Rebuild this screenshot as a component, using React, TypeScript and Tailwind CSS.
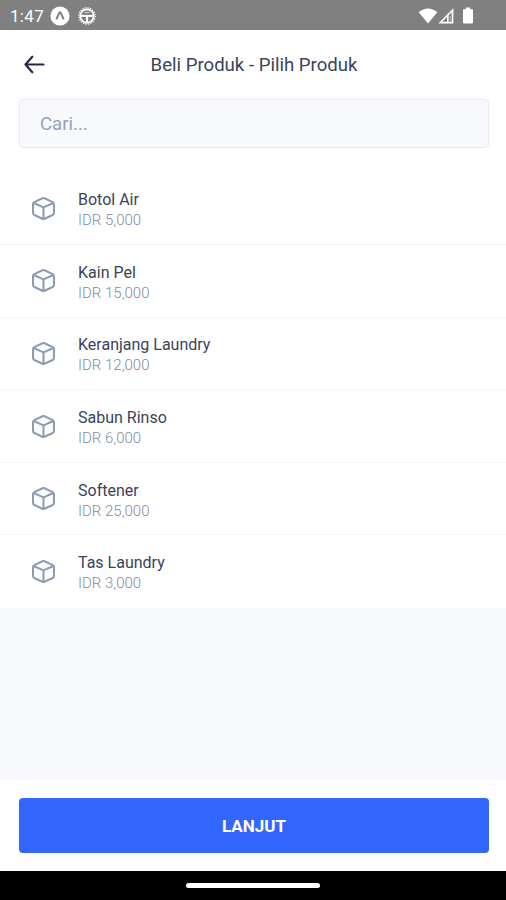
import React from 'react';

const products = [
  { name: 'Botol Air', price: 'IDR 5,000' },
  { name: 'Kain Pel', price: 'IDR 15,000' },
  { name: 'Keranjang Laundry', price: 'IDR 12,000' },
  { name: 'Sabun Rinso', price: 'IDR 6,000' },
  { name: 'Softener', price: 'IDR 25,000' },
  { name: 'Tas Laundry', price: 'IDR 3,000' },
];

const CubeIcon = () => (
  <svg
    className="w-[31px] h-[31px] shrink-0 text-[#8f9bb3]"
    xmlns="http://www.w3.org/2000/svg"
    viewBox="0 0 24 24"
    fill="none"
    stroke="currentColor"
    strokeWidth="1.6"
    strokeLinejoin="round"
  >
    <path d="M11.2 4.1 4.9 7.05Q3.9 7.6 3.9 8.5v7q0 1 1 1.5l6.3 2.95q.8.35 1.6 0l6.3-2.95q1-.5 1-1.5v-7q0-.9-1-1.45L12.8 4.1q-.8-.35-1.6 0z" />
    <path d="M4.4 7.7 12 11.1l7.6-3.4M12 11.1v8.7" />
  </svg>
);

const StatusBar = () => (
  <div className="flex h-[30px] shrink-0 items-center justify-between bg-[#808080] pl-[10px] pr-[32px] pt-px text-white">
    <div className="flex items-center">
      <span className="w-[40px] text-[17px] leading-5 tracking-[0.3px]">1:47</span>
      <svg className="h-5 w-5" viewBox="0 0 20 20">
        <circle cx="10" cy="10" r="9.6" fill="white" />
        <path d="M6.3 13.4 8.9 7.5Q10 5.2 11.1 7.5l2.6 5.9" fill="none" stroke="#808080" strokeWidth="2" />
      </svg>
      <svg className="ml-[8px] h-[18px] w-[18px]" viewBox="0 0 18 18" fill="none" stroke="white">
        <circle cx="9" cy="9" r="8.1" strokeWidth="1.2" strokeDasharray="1.5 1.05" />
        <circle cx="9" cy="9" r="6.7" strokeWidth="1.7" />
        <path d="M3 8.9h12" strokeWidth="2" />
        <path d="M9 9v7" strokeWidth="2.2" />
        <path d="M6.5 5.5h5" strokeWidth=".6" />
      </svg>
    </div>
    <div className="flex items-center">
      <svg className="h-4 w-5" viewBox="0 0 20 16" fill="white">
        <path d="M.7 4.3Q10-3.2 19.3 4.3L10 15.5z" />
      </svg>
      <svg className="h-4 w-4" viewBox="0 0 16 16">
        <path d="M15.4.3v15.1H.3z" fill="white" />
        <path d="M9 8.9v4.9H4.1z" fill="#808080" />
        <path d="M10.6 7.3 13.7 4.2v9.6h-3.1z" fill="#808080" />
        <path d="M12.2 8v5.8" stroke="#b8b8b8" strokeWidth="1" />
      </svg>
      <svg className="ml-[8px] h-[17px] w-[12px]" viewBox="0 0 12 17" fill="white">
        <path d="M3.8.5h4.4v1.7H10q1 0 1 1v12.3q0 1-1 1H2q-1 0-1-1V3.2q0-1 1-1h1.8z" />
      </svg>
    </div>
  </div>
);

const App = () => {
  return (
    <div className="flex h-[900px] w-[506px] flex-col overflow-hidden bg-[#f7f9fc] font-[Roboto,sans-serif]">
      <StatusBar />

      {/* header */}
      <div className="shrink-0 bg-white">
        <div className="flex h-[69px] items-center px-[19px]">
          <svg
            className="h-[31px] w-[31px] shrink-0 text-[#222b45]"
            xmlns="http://www.w3.org/2000/svg"
            viewBox="0 0 24 24"
            fill="none"
            stroke="currentColor"
            strokeWidth="1.7"
            strokeLinecap="round"
            strokeLinejoin="round"
          >
            <path d="M19 12H5M10.3 6 5 12l5.3 6" />
          </svg>
          <h1 className="flex-1 pr-[29px] pt-[3px] text-center text-[18.6px] text-[#3b4359]">
            Beli Produk - Pilih Produk
          </h1>
        </div>
        <div className="px-[19px] pb-[24.5px]">
          <input
            className="block h-[49px] w-[470px] rounded border border-[#e4e9f2] bg-[#f7f9fc] px-5 text-[18.6px] placeholder-[#97a2b9] outline-none"
            placeholder="Cari..."
          />
        </div>
      </div>

      {/* product list */}
      <ul className="shrink-0 bg-white">
        {products.map((product) => (
          <li
            key={product.name}
            className="flex h-[72.6px] items-center border-b border-[#f2f5fa] pl-7 last:border-transparent"
          >
            <CubeIcon />
            <div className="ml-[19px] pt-[4px]">
              <p className="text-[16px] leading-[21px] text-[#3b4359]">{product.name}</p>
              <p className="text-[15px] font-light leading-[21px] text-[#7f8ba6]">{product.price}</p>
            </div>
          </li>
        ))}
      </ul>

      <div className="mt-auto h-[91px] shrink-0 bg-white px-[19px] pt-[18px]">
        <button className="h-[55px] w-[470px] rounded bg-[#3366ff] pt-[2px] text-[17px] font-bold text-white">
          LANJUT
        </button>
      </div>

      {/* navigation bar */}
      <div className="flex h-[29px] shrink-0 items-center justify-center bg-black">
        <div className="h-[5px] w-[134px] rounded-full bg-white" />
      </div>
    </div>
  );
};

export default App;
